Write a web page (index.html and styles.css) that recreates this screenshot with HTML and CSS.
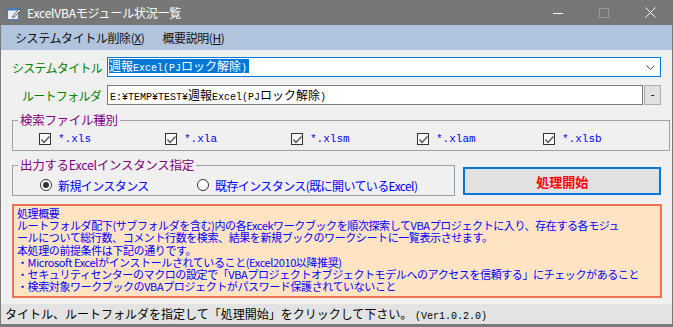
FILE: index.html
```html
<!DOCTYPE html>
<html lang="ja">
<head>
    <meta charset="UTF-8">
    <title>ExcelVBAモジュール状況一覧</title>
    <link rel="stylesheet" href="styles.css">
</head>
<body>
    <div class="window">
        <div class="titlebar">
            <svg class="app-icon" width="16" height="16" viewBox="0 0 16 16">
                <rect x="1.5" y="3.5" width="11" height="11" fill="#e8eef6" stroke="#4a78b8"/>
                <rect x="1.5" y="3.5" width="11" height="2" fill="#4a78b8"/>
                <path d="M7 11 L13 4 L14.5 5.5 L8.5 12 L6.5 12.5 Z" fill="#fff" stroke="#333" stroke-width="0.8"/>
            </svg>
            <span class="title">ExcelVBAモジュール状況一覧</span>
            <div class="controls">
                <span class="ctl"><svg width="10" height="10"><line x1="0" y1="5.5" x2="10" y2="5.5" stroke="#fff"/></svg></span>
                <span class="ctl"><svg width="10" height="10"><rect x="0.5" y="0.5" width="9" height="9" fill="none" stroke="#9a9a9a"/></svg></span>
                <span class="ctl"><svg width="11" height="11"><path d="M0.5 0.5 L10.5 10.5 M10.5 0.5 L0.5 10.5" stroke="#fff"/></svg></span>
            </div>
        </div>

        <div class="menubar">
            <span class="menu-item">システムタイトル削除(<u>X</u>)</span>
            <span class="menu-item">概要説明(<u>H</u>)</span>
        </div>

        <div class="content">
            <div class="field-row">
                <label class="field-label">システムタイトル</label>
                <div class="combo">
                    <span class="combo-text"><span class="mono-han">週報</span>Excel(PJ<span class="mono-han">ロック解除</span>)</span>
                    <svg class="chevron" width="9" height="5"><polyline points="0.5,0.5 4.5,4.5 8.5,0.5" fill="none" stroke="#555"/></svg>
                </div>
            </div>

            <div class="field-row">
                <label class="field-label">ルートフォルダ</label>
                <div class="path-box">
                    <span class="textbox">E:¥TEMP¥TEST¥<span class="mono-han">週報</span>Excel(PJ<span class="mono-han">ロック解除</span>)</span>
                    <span class="small-btn">-</span>
                </div>
            </div>

            <fieldset class="group types">
                <legend>検索ファイル種別</legend>
                <div class="check-list">
                    <span class="check-item"><span class="checkbox"><svg width="11" height="11"><polyline points="1.5,5.5 4,8.5 9.5,2.5" fill="none" stroke="#555" stroke-width="1.4"/></svg></span>*.xls</span>
                    <span class="check-item"><span class="checkbox"><svg width="11" height="11"><polyline points="1.5,5.5 4,8.5 9.5,2.5" fill="none" stroke="#555" stroke-width="1.4"/></svg></span>*.xla</span>
                    <span class="check-item"><span class="checkbox"><svg width="11" height="11"><polyline points="1.5,5.5 4,8.5 9.5,2.5" fill="none" stroke="#555" stroke-width="1.4"/></svg></span>*.xlsm</span>
                    <span class="check-item"><span class="checkbox"><svg width="11" height="11"><polyline points="1.5,5.5 4,8.5 9.5,2.5" fill="none" stroke="#555" stroke-width="1.4"/></svg></span>*.xlam</span>
                    <span class="check-item"><span class="checkbox"><svg width="11" height="11"><polyline points="1.5,5.5 4,8.5 9.5,2.5" fill="none" stroke="#555" stroke-width="1.4"/></svg></span>*.xlsb</span>
                </div>
            </fieldset>

            <div class="run-row">
                <fieldset class="group instance">
                    <legend>出力するExcelインスタンス指定</legend>
                    <div class="radio-list">
                        <span class="radio-item"><span class="radio checked"></span>新規インスタンス</span>
                        <span class="radio-item"><span class="radio"></span>既存インスタンス(既に開いているExcel)</span>
                    </div>
                </fieldset>
                <button class="run-btn">処理開始</button>
            </div>

            <div class="info">
                <p>処理概要</p>
                <p>ルートフォルダ配下(サブフォルダを含む)内の各Excekワークブックを順次探索してVBAプロジェクトに入り、存在する各モジュ</p>
                <p>ールについて総行数、コメント行数を検索、結果を新規ブックのワークシートに一覧表示させます。</p>
                <p>本処理の前提条件は下記の通りです。</p>
                <p>・Microsoft Excelがインストールされていること(Excel2010以降推奨)</p>
                <p>・セキュリティセンターのマクロの設定で「VBAプロジェクトオブジェクトモデルへのアクセスを信頼する」にチェックがあること</p>
                <p>・検索対象ワークブックのVBAプロジェクトがパスワード保護されていないこと</p>
            </div>
        </div>

        <div class="statusbar">タイトル、ルートフォルダを指定して「処理開始」をクリックして下さい。 <span class="mono">(Ver1.0.2.0)</span></div>
    </div>
</body>
</html>
```

FILE: styles.css
```css
* {
    box-sizing: border-box;
}
body {
    margin: 0;
    font-family: "Noto Sans CJK JP", sans-serif;
    font-size: 12px;
    background: #f0f0f0;
}
.window {
    width: 673px;
    height: 327px;
    display: flex;
    flex-direction: column;
    background: #f0f0f0;
    border: 1px solid #7a7a7a;
    border-top: 0;
    border-bottom-width: 3px;
}
.titlebar {
    height: 25px;
    background: #777777;
    display: flex;
    align-items: center;
    color: #fff;
    margin: 0 -1px;
}
.app-icon {
    margin: 0 5px 0 6px;
}
.title {
    font-size: 12px;
    letter-spacing: -0.2px;
}
.controls {
    margin-left: auto;
    display: flex;
    height: 100%;
}
.ctl {
    width: 46px;
    display: flex;
    align-items: center;
    justify-content: center;
}
.menubar {
    height: 25px;
    background: #b0c4de;
    display: flex;
    align-items: center;
    padding-left: 14px;
    gap: 18px;
}
.menu-item {
    font-size: 12px;
    letter-spacing: -0.4px;
    color: #111;
}
.menu-item u {
    text-underline-offset: 1px;
}
.content {
    padding: 7px 11px 0 11px;
}
.field-row {
    display: grid;
    grid-template-columns: 89px 1fr;
    column-gap: 6px;
    align-items: center;
    height: 20px;
    margin-bottom: 8px;
}
.field-label {
    color: #008000;
    text-align: right;
    font-size: 12px;
    letter-spacing: -0.7px;
    white-space: nowrap;
}
.combo {
    height: 20px;
    background: #fff;
    border: 1px solid #0078d7;
    display: flex;
    align-items: flex-start;
    padding: 0 5px 0 1px;
}
.combo-text {
    background: #0078d7;
    color: #fff;
    height: 14px;
    line-height: 14px;
    margin-top: 1px;
    font-family: "Liberation Mono", monospace;
    font-size: 10px;
    padding-right: 2px;
}
.mono-han {
    font-family: "Noto Sans CJK JP", sans-serif;
    font-size: 12px;
}
.chevron {
    margin: 7px 0 0 auto;
}
.path-box {
    display: flex;
    gap: 1px;
    height: 20px;
}
.textbox {
    flex: 1;
    background: #fff;
    border: 1px solid #7a7a7a;
    font-family: "Liberation Mono", monospace;
    font-size: 10px;
    line-height: 17px;
    padding-left: 2px;
}
.small-btn {
    width: 17px;
    background: #e1e1e1;
    border: 1px solid #adadad;
    text-align: center;
    line-height: 16px;
    font-size: 12px;
}
.group {
    margin: 0;
    border: 1px solid #a0a0a0;
    padding: 0;
}
.group legend {
    color: #800080;
    font-size: 12.5px;
    line-height: 14px;
    letter-spacing: -0.3px;
    padding: 0 2px;
    margin-left: 5px;
}
.types {
    margin-top: 6px;
    padding: 6px 0 5px 0;
}
.check-list {
    display: grid;
    grid-template-columns: repeat(5, 126px);
    padding-left: 26px;
}
.check-item {
    display: flex;
    align-items: center;
    color: #0000ff;
    font-family: "Liberation Mono", monospace;
    font-size: 11px;
    height: 12px;
}
.checkbox {
    width: 12px;
    height: 12px;
    border: 1px solid #333;
    background: #f8f8f8;
    margin-right: 7px;
    display: flex;
}
.run-row {
    display: flex;
    align-items: flex-end;
    margin-top: 7px;
    gap: 8px;
}
.instance {
    width: 444px;
    padding: 7px 0 4px 0;
}
.radio-list {
    display: flex;
    gap: 16px;
    padding-left: 27px;
}
.radio-item {
    display: flex;
    align-items: center;
    color: #0000ff;
    font-size: 12px;
    letter-spacing: -0.6px;
    height: 12px;
    white-space: nowrap;
}
.radio-item:first-child {
    width: 141px;
}
.radio {
    width: 12px;
    height: 12px;
    border: 1px solid #333;
    border-radius: 50%;
    background: #fff;
    margin-right: 6px;
    display: flex;
    align-items: center;
    justify-content: center;
}
.radio.checked::after {
    content: "";
    width: 6px;
    height: 6px;
    border-radius: 50%;
    background: #333;
}
.run-btn {
    width: 198px;
    height: 28px;
    margin-bottom: 1px;
    background: #e1e1e1;
    border: 2px solid #0078d7;
    color: #ff0000;
    font-family: "Noto Sans CJK JP", sans-serif;
    font-weight: bold;
    font-size: 13px;
    padding: 0;
}
.info {
    margin-top: 8px;
    margin-right: -1px;
    height: 94px;
    background: #ffe4c4;
    border: 2px solid #f07050;
    padding: 1px 0 0 3px;
    color: #0000ff;
    font-size: 11px;
    letter-spacing: -0.4px;
    line-height: 12.2px;
}
.info p {
    margin: 0;
    white-space: nowrap;
}
.statusbar {
    margin-top: auto;
    height: 20px;
    background: #e3e3e3;
    padding-left: 4px;
    font-size: 12px;
    line-height: 20px;
    white-space: nowrap;
}
.mono {
    font-family: "Liberation Mono", monospace;
    font-size: 10px;
}
```
